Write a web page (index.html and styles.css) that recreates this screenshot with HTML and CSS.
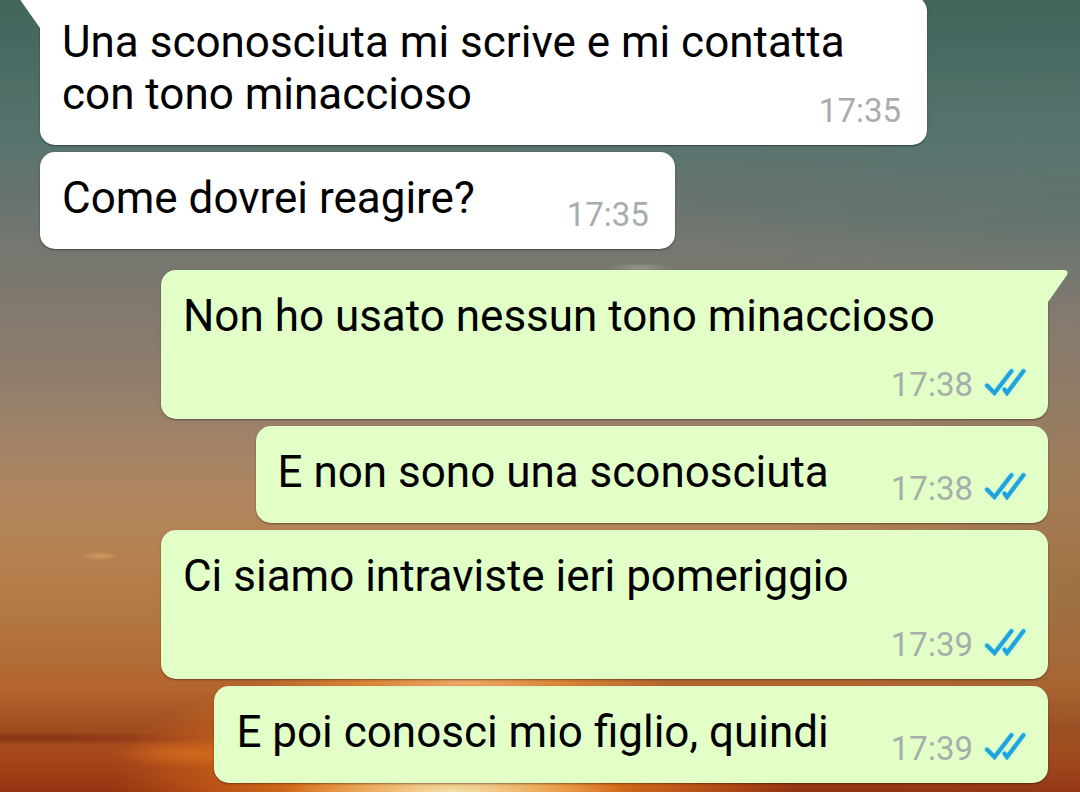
FILE: index.html
```html
<!DOCTYPE html>
<html lang="it">
<head>
<meta charset="utf-8">
<meta name="viewport" content="width=device-width, initial-scale=1">
<title>Chat</title>
<link rel="stylesheet" href="styles.css">
</head>
<body>
<svg class="defs" aria-hidden="true">
  <symbol id="ticks" viewBox="0 0 42 28">
    <g fill="none" stroke-linecap="round">
      <path d="M3 17.500L10.500 25L27.500 3M20.500 21.500L23 25L39.500 3" stroke="#8fe0f2" stroke-opacity=".6" stroke-width="5.500"/>
      <path d="M3 17.500L10.500 25L27.500 3M20.500 21.500L23 25L39.500 3" stroke="#1ea3dc" stroke-width="4"/>
    </g>
  </symbol>
</svg>
<main class="thread">
  <section class="group group-in">
    <article class="bubble">
      <svg class="tail" viewBox="0 0 22 32" aria-hidden="true"><path d="M22 0H4Q-1 0 1 5L20 32H22Z" fill="currentColor"/></svg>
      Una sconosciuta mi scrive e mi contatta con tono minaccioso<span class="meta"><time>17:35</time></span>
    </article>
    <article class="bubble">
      Come dovrei reagire?<span class="meta"><time>17:35</time></span>
    </article>
  </section>
  <section class="group group-out">
    <article class="bubble">
      <svg class="tail" viewBox="0 0 22 32" aria-hidden="true"><path d="M0 0H18Q23 0 21 5L2 32H0Z" fill="currentColor"/></svg>
      Non ho usato nessun tono minaccioso<span class="meta"><time>17:38</time><svg class="ticks" role="img" aria-label="Letto"><use href="#ticks"/></svg></span>
    </article>
    <article class="bubble">
      E non sono una sconosciuta<span class="meta"><time>17:38</time><svg class="ticks" role="img" aria-label="Letto"><use href="#ticks"/></svg></span>
    </article>
    <article class="bubble">
      Ci siamo intraviste ieri pomeriggio<span class="meta"><time>17:39</time><svg class="ticks" role="img" aria-label="Letto"><use href="#ticks"/></svg></span>
    </article>
    <article class="bubble">
      E poi conosci mio figlio, quindi<span class="meta"><time>17:39</time><svg class="ticks" role="img" aria-label="Letto"><use href="#ticks"/></svg></span>
    </article>
  </section>
</main>
</body>
</html>
```
FILE: styles.css
```css
* {
  box-sizing: border-box;
}

body {
  margin: 0;
  min-height: 100vh;
  display: flow-root;
  font-family: Roboto, "Liberation Sans", sans-serif;
  color: #000;
  background:
    radial-gradient(ellipse 170px 34px at 42% 100%, #f3e2ae 0%, #f0b468cc 55%, #e0852a00 100%),
    radial-gradient(ellipse 200px 14px at 43% 683px, #f0ab6c 0%, #e8963d99 50%, #e0852a00 100%),
    radial-gradient(ellipse 340px 120px at 42% 98%, #ee8419 0%, #e0741bcc 50%, #d0651c00 100%),
    radial-gradient(ellipse 80px 14px at 190px 754px, #e2761f99 0%, #e2761f00 100%),
    radial-gradient(ellipse 190px 7px at 3% 738px, #7c2c12cc 0%, #7c2c1200 100%),
    radial-gradient(ellipse 18px 4px at 100px 556px, #cf9c62 0%, #cf9c6200 100%),
    radial-gradient(ellipse 30px 5px at 640px 268px, #95998c 0%, #95998c00 100%),
    radial-gradient(ellipse 400px 120px at 100% 190px, #58746e88 0%, #58746e00 100%),
    radial-gradient(ellipse 300px 260px at 100% 580px, #7c603c66 0%, #7c603c00 100%),
    linear-gradient(#41645b 0, #4f6f67 90px, #58746e 145px, #65726f 185px, #72776f 240px, #80796f 300px, #8d7d6c 370px, #9d8269 430px, #b08660 495px, #b5824f 560px, #b27642 620px, #b4652d 690px, #a04b1e 730px, #a84a1c 750px, #963412 792px);
}

.defs {
  position: absolute;
  width: 0;
  height: 0;
}

/* The thread is scrolled slightly past its first bubble. */
.thread {
  display: flex;
  flex-direction: column;
  gap: 21px;
  margin-top: -4px;
  padding: 0 32px 10px 40px;
}

.group {
  display: flex;
  flex-direction: column;
  gap: 7px;
}

.group-in {
  align-items: flex-start;
  --bubble: #fff;
}

.group-out {
  align-items: flex-end;
  --bubble: #e1ffc7;
}

.bubble {
  position: relative;
  display: flow-root;
  max-width: 88%;
  padding: 20px 22px 15px 22px;
  border-radius: 15px;
  background: var(--bubble);
  box-shadow: 0 1px 2px #0006;
  font-size: 44px;
  line-height: 52px;
}

.group-in .bubble {
  padding-right: 26px;
}

.group-in .bubble:first-child {
  border-top-left-radius: 0;
}

.group-out .bubble:first-child {
  border-top-right-radius: 0;
}

.tail {
  position: absolute;
  top: 0;
  width: 22px;
  height: 32px;
  color: var(--bubble);
}

.group-in .tail {
  right: calc(100% - 2px);
}

.group-out .tail {
  left: calc(100% - 2px);
}

.meta {
  float: right;
  display: flex;
  align-items: center;
  gap: 11px;
  margin: 24px 0 0 62px;
  color: #a7adab;
  font-size: 33px;
  line-height: 38px;
}

.group-in .meta {
  margin-left: 92px;
}

.ticks {
  width: 42px;
  height: 28px;
  margin-bottom: 6px;
}
```
